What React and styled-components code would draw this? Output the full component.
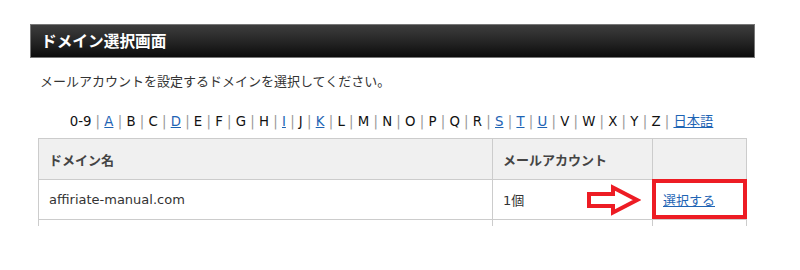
import React from "react";
import styled, { createGlobalStyle } from "styled-components";

const GlobalStyle = createGlobalStyle`
  html, body { margin: 0; padding: 0; background: #fff; }
  body {
    font-family: "DejaVu Sans", "Noto Sans CJK JP", sans-serif;
    font-size: 13px;
    color: #333;
  }
`;

const Page = styled.div`
  width: 725px;
  padding: 24px 0 0 30px;
`;

const TitleBar = styled.h1`
  margin: 0;
  height: 34px;
  box-sizing: border-box;
  border: 1px solid #777;
  background: linear-gradient(to bottom, #3d3d3d 0%, #262626 50%, #0c0c0c 100%);
  color: #fff;
  font-family: "Noto Sans CJK JP", sans-serif;
  font-weight: bold;
  font-size: 15.7px;
  line-height: 32px;
  padding-left: 10px;
`;

const Body = styled.div`
  padding: 0 10px 0 8px;
`;

const Description = styled.p`
  margin: 13px 0 0 2px;
  line-height: 20px;
  color: #333;
  font-family: "Noto Sans CJK JP", sans-serif;
`;

const AlphaNav = styled.div`
  margin-top: 21px;
  line-height: 20px;
  font-size: 13.3px;
  text-align: center;
  color: #111;
`;

const Sep = styled.span`
  color: #999;
`;

const NavLink = styled.a`
  color: #1e64b4;
  text-decoration: underline;
`;

const Table = styled.table`
  margin-top: 6px;
  width: 708px;
  border-collapse: collapse;
  table-layout: fixed;
`;

const Th = styled.th`
  height: 40px;
  padding: 0 10px;
  background: #f0f0f0;
  border: 1px solid #ccc;
  text-align: left;
  font-family: "Noto Sans CJK JP", sans-serif;
  font-weight: bold;
  color: #444;
  font-size: 13px;
`;

const Td = styled.td`
  position: relative;
  height: ${(p) => (p.$stub ? "6px" : "39px")};
  padding: 0 10px;
  border-left: 1px solid #ccc;
  border-right: 1px solid #ccc;
  border-bottom: ${(p) => (p.$stub ? "none" : "1px solid #ccc")};
  color: #333;
  vertical-align: middle;
`;

const CellRow = styled.div`
  display: flex;
  align-items: center;
  justify-content: space-between;
`;

const SelectLink = styled.a`
  color: #1e64b4;
  text-decoration: underline;
  font-family: "Noto Sans CJK JP", sans-serif;
`;

const Highlight = styled.span`
  position: absolute;
  left: -1px;
  top: -1px;
  width: 95px;
  height: 40px;
  box-sizing: border-box;
  border: 4px solid #ed1c24;
  pointer-events: none;
`;

const Arrow = () => (
  <svg width="56" height="32" viewBox="0 0 56 32" style={{ display: "block", marginRight: "1px" }}>
    <polygon
      points="4,10 28,10 28,3.5 52,16 28,28.5 28,22 4,22"
      fill="#fff"
      stroke="#ed1c24"
      strokeWidth="4"
      strokeLinejoin="miter"
    />
  </svg>
);

const letters = [
  ["0-9", false],
  ["A", true],
  ["B", false],
  ["C", false],
  ["D", true],
  ["E", false],
  ["F", false],
  ["G", false],
  ["H", false],
  ["I", true],
  ["J", false],
  ["K", true],
  ["L", false],
  ["M", false],
  ["N", false],
  ["O", false],
  ["P", false],
  ["Q", false],
  ["R", false],
  ["S", true],
  ["T", true],
  ["U", true],
  ["V", false],
  ["W", false],
  ["X", false],
  ["Y", false],
  ["Z", false],
  ["日本語", true],
];

export default function App() {
  return (
    <>
      <GlobalStyle />
      <Page>
        <TitleBar>ドメイン選択画面</TitleBar>
        <Body>
          <Description>メールアカウントを設定するドメインを選択してください。</Description>
          <AlphaNav>
            {letters.map(([l, link], i) => (
              <React.Fragment key={l}>
                {i > 0 && <Sep> | </Sep>}
                {link ? <NavLink href="#">{l}</NavLink> : <span>{l}</span>}
              </React.Fragment>
            ))}
          </AlphaNav>
          <Table>
            <colgroup>
              <col style={{ width: "454px" }} />
              <col style={{ width: "160px" }} />
              <col style={{ width: "94px" }} />
            </colgroup>
            <thead>
              <tr>
                <Th>ドメイン名</Th>
                <Th>メールアカウント</Th>
                <Th></Th>
              </tr>
            </thead>
            <tbody>
              <tr>
                <Td>affiriate-manual.com</Td>
                <Td>
                  <CellRow>
                    <span>1個</span>
                    <Arrow />
                  </CellRow>
                </Td>
                <Td>
                  <SelectLink href="#">選択する</SelectLink>
                  <Highlight />
                </Td>
              </tr>
              <tr>
                <Td $stub />
                <Td $stub />
                <Td $stub />
              </tr>
            </tbody>
          </Table>
        </Body>
      </Page>
    </>
  );
}
